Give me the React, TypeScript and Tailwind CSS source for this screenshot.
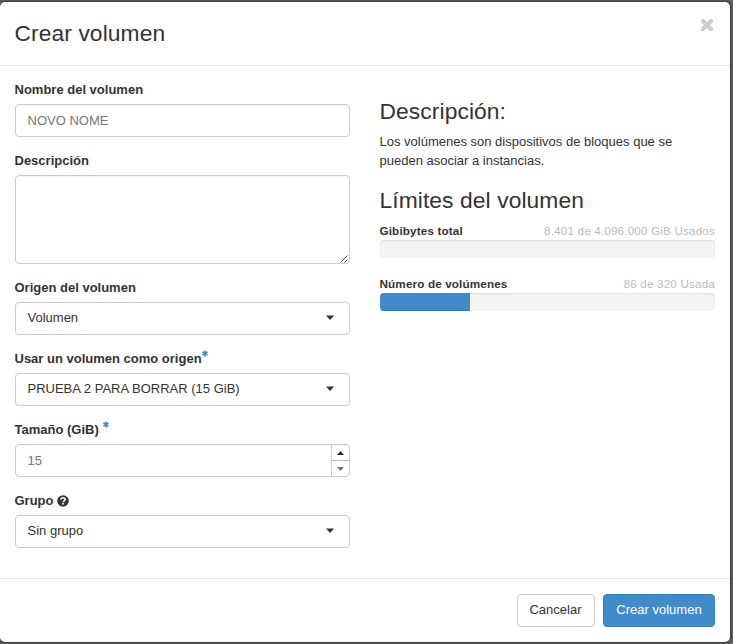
import React from 'react';

function Label({ text, children }: { text: string; children?: React.ReactNode }) {
  return (
    <div className="mb-[5px] -ml-[0.5px] flex h-[18px] items-center whitespace-pre text-[13px] leading-[18px] font-bold">
      <span>{text}</span>
      {children}
    </div>
  );
}

function Required({ spaced }: { spaced?: boolean }) {
  return (
    <svg className={`${spaced ? 'ml-[4px]' : 'ml-0'} mb-[11px] h-[7px] w-[6px]`} viewBox="0 0 6 7" stroke="#428bca" strokeWidth="1.7">
      <path d="M3 .5v6M.4 2l5.2 3M5.6 2l-5.2 3" />
    </svg>
  );
}

function Caret() {
  return (
    <svg className="h-[5px] w-[9px]" viewBox="0 0 9 5" fill="#333">
      <path d="M0 .5h8.2L4.1 4.9z" />
    </svg>
  );
}

function Select({ value }: { value: string }) {
  return (
    <div className="flex h-[33px] items-center justify-between rounded border border-[#ccc] bg-white pr-[14px] pl-[11.5px] pb-[2px] text-[13px]">
      <span>{value}</span>
      <Caret />
    </div>
  );
}

function Quota({ name, usage, percent }: { name: string; usage: string; percent: number }) {
  return (
    <div>
      <div className="flex h-[17px] items-center justify-between pb-[2px] text-[11.7px]">
        <strong className="-ml-[0.5px] tracking-[0.14px]">{name}</strong>
        <span className="tracking-[0.16px] text-[#bbb]">{usage}</span>
      </div>
      <div className="h-[18px] overflow-hidden rounded bg-[#f5f5f5] shadow-[inset_0_1px_2px_rgba(0,0,0,0.1)]">
        <div className="h-full bg-[#428bca] shadow-[inset_0_-1px_0_rgba(0,0,0,0.15)]" style={{ width: `${percent}%` }} />
      </div>
    </div>
  );
}

export default function App() {
  return (
    <div className="h-[644px] w-[733px] overflow-hidden bg-[#656565] pt-[2px] font-['Liberation_Sans',Arial,sans-serif] text-[13px] text-[#333]">
      <div className="flex h-[640px] w-[730px] flex-col rounded-[5px] bg-white shadow-[0_0_3px_1px_rgba(0,0,0,0.5)]">
        <header className="flex h-16 shrink-0 items-start justify-between border-b border-[#e5e5e5] pr-4 pl-[14.5px]">
          <h1 className="mt-[18px] text-[22.8px] leading-[26px] tracking-[0.09px]">Crear volumen</h1>
          <svg className="mt-4 h-[14px] w-[14px]" viewBox="0 0 14 14" stroke="#ccc" strokeWidth="4.2" strokeLinecap="round">
            <path d="M3 3l8 8M11 3l-8 8" />
          </svg>
        </header>

        <main className="flex flex-1 gap-[30px] px-[15px] pt-[15px]">
          <form className="flex w-[335px] flex-col gap-[15px]">
            <div>
              <Label text="Nombre del volumen" />
              <div className="flex h-[33px] items-center rounded border border-[#ccc] px-[11.5px] text-[#777] shadow-[inset_0_1px_1px_rgba(0,0,0,0.04)]">NOVO NOME</div>
            </div>
            <div>
              <Label text="Descripción" />
              <div className="flex h-[89px] items-end justify-end rounded border border-[#ccc] shadow-[inset_0_1px_1px_rgba(0,0,0,0.04)]">
                <svg className="mr-px h-[8px] w-[8px]" viewBox="0 0 8 8" stroke="#555" strokeWidth="1">
                  <path d="M.5 7.5l7-7M4.5 7.5l3-3" />
                </svg>
              </div>
            </div>
            <div>
              <Label text="Origen del volumen" />
              <Select value="Volumen" />
            </div>
            <div>
              <Label text="Usar un volumen como origen"><Required /></Label>
              <Select value="PRUEBA 2 PARA BORRAR (15 GiB)" />
            </div>
            <div>
              <Label text="Tamaño (GiB)"><Required spaced /></Label>
              <div className="flex h-[33px] overflow-hidden rounded border border-[#ccc] shadow-[inset_0_1px_1px_rgba(0,0,0,0.04)]">
                <span className="flex flex-1 items-center pl-[11.5px] text-[#777]">15</span>
                <div className="flex w-[18px] flex-col border-l border-[#ccc]">
                  <div className="flex h-[16px] items-center justify-center border-b border-[#bbb] pt-px">
                    <svg className="h-1 w-[7px]" viewBox="0 0 7 4" fill="#222"><path d="M0 4h7L3.5 0z" /></svg>
                  </div>
                  <div className="flex flex-1 items-center justify-center">
                    <svg className="h-1 w-[7px]" viewBox="0 0 7 4" fill="#777"><path d="M0 0h7L3.5 4z" /></svg>
                  </div>
                </div>
              </div>
            </div>
            <div>
              <Label text="Grupo">
                <svg className="mb-px ml-[3.5px] h-[12px] w-[12px]" viewBox="0 0 12 12" fill="none">
                  <circle cx="6" cy="6" r="5.8" fill="#333" />
                  <path d="M3.9 4.6C4 3.2 4.8 2.8 6 2.8c1.3 0 2.1.7 2.1 1.7 0 1.4-1.9 1.2-1.9 2.7" stroke="#fff" strokeWidth="1.6" />
                  <path d="M5.2 8h1.7v1.6H5.2z" fill="#fff" />
                </svg>
              </Label>
              <Select value="Sin grupo" />
            </div>
          </form>

          <section className="w-[335px] pt-[17px]">
            <h2 className="-ml-[0.5px] text-[22.8px] leading-[26px] tracking-[0.09px]">Descripción:</h2>
            <p className="mt-[8px] -ml-[0.5px] leading-[19px]">Los volúmenes son dispositivos de bloques que se pueden asociar a instancias.</p>
            <h2 className="mt-[17px] mb-[10px] -ml-[0.5px] text-[22.8px] leading-[26px] tracking-[0.09px]">Límites del volumen</h2>
            <div className="flex flex-col gap-[18px]">
              <Quota name="Gibibytes total" usage="8.401 de 4.096.000 GiB Usados" percent={0} />
              <Quota name="Número de volúmenes" usage="86 de 320 Usada" percent={26.875} />
            </div>
          </section>
        </main>

        <footer className="flex h-16 shrink-0 items-start justify-end gap-2 border-t border-[#e5e5e5] pt-[15px] pr-[15px]">
          <button className="h-[33px] w-[78px] rounded border border-[#ccc] pr-px pb-[2px]">Cancelar</button>
          <button className="h-[33px] w-[112px] rounded border border-[#357ebd] bg-[#428bca] pb-[2px] text-white">Crear volumen</button>
        </footer>
      </div>
    </div>
  );
}
